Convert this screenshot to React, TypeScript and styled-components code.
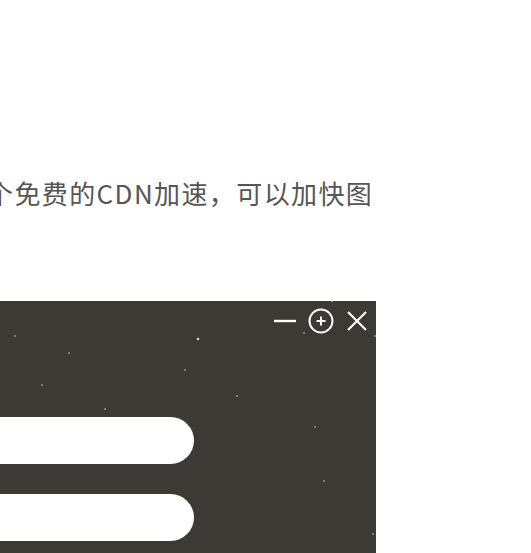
import React from "react";
import styled, { createGlobalStyle } from "styled-components";

const Global = createGlobalStyle`
  html, body { margin: 0; padding: 0; background: #fff; overflow: hidden; }
  body { width: 531px; height: 553px; }
`;

const Page = styled.div`
  width: 531px;
  height: 553px;
  overflow: hidden;
  display: flex;
  flex-direction: column;
  background: #fff;
`;

const Paragraph = styled.p`
  margin: 173px 0 0 -13px;
  font-family: "Noto Sans CJK SC", "Microsoft YaHei", sans-serif;
  font-size: 26px;
  letter-spacing: 1.4px;
  line-height: 39px;
  color: #555;
  white-space: nowrap;
`;

const Panel = styled.section`
  position: relative;
  margin-top: 89px;
  width: 376px;
  height: 252px;
  background: #3d3a35;
  overflow: hidden;
  display: flex;
  flex-direction: column;
`;

const Stars = styled.svg`
  position: absolute;
  inset: 0;
  pointer-events: none;
`;

const TitleBar = styled.div`
  position: relative;
  display: flex;
  justify-content: flex-end;
  align-items: center;
  height: 40px;
  padding-right: 1px;
`;

const IconButton = styled.button`
  width: 36px;
  height: 30px;
  padding: 0;
  border: none;
  background: transparent;
  display: flex;
  align-items: center;
  justify-content: center;
  color: #fff;
`;

const Form = styled.div`
  position: relative;
  display: flex;
  flex-direction: column;
  gap: 30px;
  margin-top: 76px;
`;

const Field = styled.div`
  margin-left: -80px;
  width: 274px;
  height: 47px;
  border-radius: 24px;
  background: #fff;
`;

const stars: [number, number, number][] = [
  [15, 35, 0.8],
  [198, 38, 1.3],
  [69, 52, 0.8],
  [185, 69, 0.8],
  [42, 84, 0.8],
  [237, 95, 0.8],
  [105, 108, 0.8],
  [315, 126, 0.8],
  [324, 180, 0.8],
  [373, 233, 0.8],
  [304, 32, 0.8],
  [375, 35, 0.8],
  [332, 0, 0.8],
];

export default function App() {
  return (
    <Page>
      <Global />
      <Paragraph>个免费的CDN加速，可以加快图</Paragraph>
      <Panel>
        <Stars width="376" height="252">
          {stars.map(([x, y, r], i) => (
            <circle key={i} cx={x} cy={y} r={r} fill="#d8d6d2" />
          ))}
        </Stars>
        <TitleBar>
          <IconButton aria-label="minimize">
            <svg width="24" height="24" viewBox="0 0 24 24">
              <line x1="1" y1="12" x2="23" y2="12" stroke="#fff" strokeWidth="2.4" />
            </svg>
          </IconButton>
          <IconButton aria-label="maximize">
            <svg width="26" height="26" viewBox="0 0 26 26">
              <circle cx="13" cy="13" r="11.5" fill="none" stroke="#fff" strokeWidth="2" />
              <line x1="13" y1="8.5" x2="13" y2="17.5" stroke="#fff" strokeWidth="2" />
              <line x1="8.5" y1="13" x2="17.5" y2="13" stroke="#fff" strokeWidth="2" />
            </svg>
          </IconButton>
          <IconButton aria-label="close">
            <svg width="22" height="22" viewBox="0 0 22 22">
              <line x1="2" y1="2" x2="20" y2="20" stroke="#fff" strokeWidth="2.2" />
              <line x1="20" y1="2" x2="2" y2="20" stroke="#fff" strokeWidth="2.2" />
            </svg>
          </IconButton>
        </TitleBar>
        <Form>
          <Field />
          <Field />
        </Form>
      </Panel>
    </Page>
  );
}
